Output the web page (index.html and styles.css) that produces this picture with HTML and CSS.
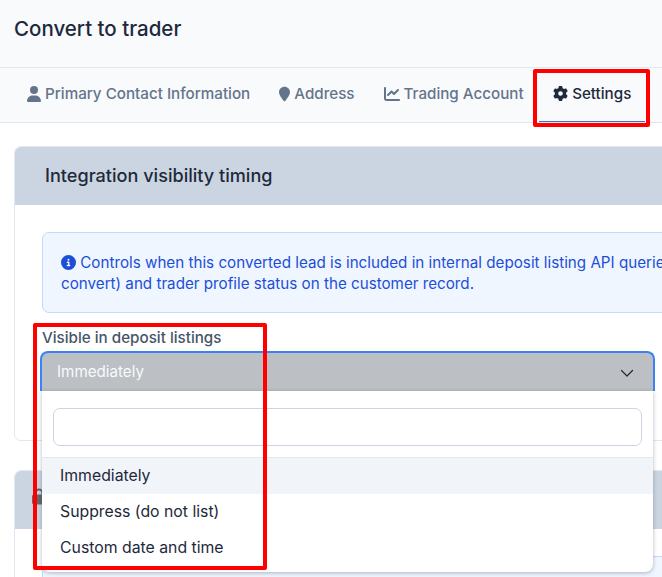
FILE: index.html
```html
<!DOCTYPE html>
<html lang="en">
<head>
<meta charset="utf-8">
<title>Convert to trader</title>
<link rel="stylesheet" href="styles.css">
</head>
<body>
<div class="page">
  <header class="head"><h1>Convert to trader</h1></header>
  <nav class="tabs">
    <a class="tab">
      <svg class="ico i-user" viewBox="0 0 448 512"><path d="M224 256a128 128 0 1 0 0-256 128 128 0 1 0 0 256zm-45.700 48C79.800 304 0 383.800 0 482.300 0 498.700 13.300 512 29.700 512h388.600c16.400 0 29.700-13.300 29.700-29.700C448 383.800 368.200 304 269.700 304h-91.400z"/></svg>
      Primary Contact Information</a>
    <a class="tab">
      <svg class="ico i-pin" viewBox="0 0 384 512"><path d="M215.700 499.200C267 435 384 279.400 384 192 384 86 298 0 192 0S0 86 0 192c0 87.400 117 243 168.300 307.200 12.300 15.300 35.100 15.300 47.400 0z"/></svg>
      Address</a>
    <a class="tab">
      <svg class="ico i-chart" viewBox="0 0 512 512"><path d="M64 64c0-17.700-14.300-32-32-32S0 46.300 0 64v336c0 44.200 35.800 80 80 80h400c17.700 0 32-14.300 32-32s-14.300-32-32-32H80c-8.800 0-16-7.200-16-16V64zm406.600 86.600c12.500-12.500 12.500-32.800 0-45.300s-32.800-12.500-45.300 0L320 210.700l-57.400-57.400c-12.500-12.500-32.800-12.500-45.300 0l-112 112c-12.500 12.500-12.500 32.800 0 45.300s32.800 12.500 45.300 0l89.400-89.300 57.400 57.400c12.500 12.500 32.800 12.500 45.300 0l128-128z"/></svg>
      Trading Account</a>
    <a class="tab active">
      <svg class="ico" viewBox="0 0 512 512"><path d="M495.900 166.600c3.200 8.700.5 18.400-6.400 24.600l-43.300 39.400c1.100 8.300 1.700 16.800 1.700 25.400s-.6 17.100-1.700 25.400l43.300 39.400c6.900 6.200 9.600 15.900 6.400 24.600-4.400 11.900-9.700 23.300-15.800 34.300l-4.700 8.100c-6.600 11-14 21.400-22.100 31.200-5.900 7.200-15.700 9.600-24.500 6.800l-55.700-17.700c-13.400 10.300-28.200 18.900-44 25.400l-12.500 57.100c-2 9.100-9 16.300-18.200 17.800-13.800 2.300-28 3.500-42.500 3.500s-28.700-1.200-42.500-3.500c-9.200-1.500-16.200-8.700-18.200-17.800l-12.500-57.100c-15.800-6.500-30.600-15.100-44-25.400l-55.600 17.800c-8.800 2.800-18.600.3-24.500-6.800-8.100-9.800-15.500-20.200-22.100-31.200l-4.700-8.100c-6.100-11-11.400-22.400-15.800-34.300-3.200-8.700-.5-18.400 6.400-24.600l43.300-39.400c-1.100-8.400-1.700-16.900-1.700-25.500s.6-17.100 1.700-25.400l-43.300-39.400c-6.900-6.200-9.600-15.900-6.400-24.600 4.400-11.900 9.700-23.300 15.800-34.300l4.700-8.100c6.600-11 14-21.400 22.100-31.200 5.900-7.200 15.700-9.600 24.500-6.800l55.700 17.700c13.400-10.300 28.200-18.900 44-25.400l12.500-57.100c2-9.100 9-16.300 18.200-17.800C227.300 1.200 241.500 0 256 0s28.700 1.200 42.500 3.500c9.200 1.500 16.200 8.700 18.200 17.800l12.500 57.100c15.800 6.500 30.600 15.100 44 25.400l55.700-17.700c8.800-2.800 18.600-.3 24.500 6.800 8.100 9.800 15.500 20.200 22.100 31.200l4.700 8.100c6.100 11 11.400 22.400 15.800 34.300zM256 336a80 80 0 1 0 0-160 80 80 0 1 0 0 160z"/></svg>
      Settings</a>
  </nav>
  <main class="content">
    <section class="card">
      <h2 class="card-head">Integration visibility timing</h2>
      <div class="card-body">
        <div class="alert"><svg class="ico info" viewBox="0 0 512 512"><path d="M256 512a256 256 0 1 0 0-512 256 256 0 1 0 0 512zm-40-176h24v-64h-24c-13.300 0-24-10.700-24-24s10.700-24 24-24h48c13.300 0 24 10.700 24 24v88h8c13.300 0 24 10.700 24 24s-10.700 24-24 24h-80c-13.300 0-24-10.700-24-24s10.700-24 24-24zm40-208a32 32 0 1 1 0 64 32 32 0 1 1 0-64z"/></svg> Controls when this converted lead is included in internal deposit listing API queries<br>convert) and trader profile status on the customer record.</div>
        <label class="label">Visible in deposit listings</label>
        <div class="select">
          <div class="select-box">
            <span>Immediately</span>
            <svg class="chev" viewBox="0 0 16 16"><path d="M2.500 5.500 8 11l5.500-5.500" fill="none" stroke="currentColor" stroke-width="1.200" stroke-linecap="round" stroke-linejoin="round"/></svg>
          </div>
          <div class="drop">
            <div class="search-wrap"><input class="search" type="text" aria-label="Search"></div>
            <ul class="opts">
              <li class="opt hl">Immediately</li>
              <li class="opt">Suppress (do not list)</li>
              <li class="opt">Custom date and time</li>
            </ul>
          </div>
        </div>
      </div>
    </section>
    <section class="card second">
      <h2 class="card-head"><svg class="ico lock" viewBox="0 0 448 512"><path d="M144 144v48h160v-48c0-44.200-35.800-80-80-80s-80 35.800-80 80zm-64 48v-48C80 64.500 144.500 0 224 0s144 64.500 144 144v48h16c35.300 0 64 28.700 64 64v192c0 35.300-28.700 64-64 64H64c-35.300 0-64-28.700-64-64V256c0-35.300 28.700-64 64-64h16z"/></svg></h2>
      <div class="card-body"><div class="alert"></div></div>
    </section>
  </main>
  <i class="mark mark-tab"></i>
  <i class="mark mark-select"></i>
</div>
</body>
</html>
```
FILE: styles.css
```css
* { box-sizing: border-box; }
html, body { margin: 0; height: 100%; overflow: hidden; }
body { font-family: Inter, "Liberation Sans", sans-serif; color: #1e293b; background: #fff; }
.page { position: relative; width: 662px; height: 577px; overflow: hidden; }
.head { height: 68px; padding: 17px 14px 0; background: #f8fafc; border-bottom: 1px solid #e2e8f0; }
.head h1 { margin: 0; font-size: 20.500px; line-height: 24px; font-weight: 500; color: #1e293b; }
.tabs { display: flex; height: 55px; padding-left: 12.500px; background: #f8fafc; border-bottom: 1px solid #e2e8f0; white-space: nowrap; }
.tab { display: flex; align-items: center; gap: 4px; height: 54px; padding: 0 14.500px 3px; font-size: 15.200px; font-weight: 500; color: #64748b; }
.tab.active { margin-left: 1px; padding: 0 14px 3px; color: #1e293b; border-bottom: 1px solid #3b6fd4; }
.ico { width: 15px; height: 15px; fill: currentColor; flex: none; }
.i-user { width: 14px; height: 16px; }
.i-pin { width: 11px; height: 16px; }
.i-chart { width: 16px; height: 16px; }
.content { padding: 23px 0 0 14px; }
.card { width: 700px; height: 295px; border: 1px solid #e2e8f0; border-radius: 7px; background: #fff; }
.second { height: 200px; margin-top: 29px; }
.card-head { margin: 0; height: 58px; padding: 15px 30px 0; border-radius: 6px 6px 0 0; background: #cbd5e1; font-size: 18.100px; line-height: 26px; font-weight: 500; color: #1e293b; }
.card-body { padding: 27px 27px 0; }
.alert { height: 81px; padding: 19px 18px 0; border: 1px solid #bfdbfe; border-radius: 7px; background: #eff6ff; color: #1d4ed8; font-size: 15.200px; line-height: 21px; white-space: nowrap; }
.info { vertical-align: -2px; color: #1d4ed8; }
.label { display: block; margin-top: 15px; font-size: 15.200px; line-height: 20px; font-weight: 500; color: #475569; }
.select { position: relative; width: 615px; margin: 3px 0 0 -2px; }
.select-box { display: flex; align-items: center; justify-content: space-between; height: 40px; padding: 0 18px 0 15px; background: #bcbfc3; border: solid #3b82f6; border-width: 2px 2px 0; border-radius: 8px 8px 0 0; font-size: 15.200px; color: #f8fafc; }
.select-box span { margin-top: -1px; }
.chev { width: 16px; height: 16px; color: #1e293b; margin-top: 2px; }
.drop { position: absolute; z-index: 2; left: 2px; top: 40px; width: 611px; height: 181px; background: #fff; border-radius: 0 0 8px 8px; box-shadow: 0 1px 4px rgba(15, 23, 42, .3); }
.search-wrap { height: 66px; padding: 17px 11px 0; }
.search { display: block; width: 100%; height: 38px; border: 1px solid #cbd5e1; border-radius: 7px; background: #fff; outline: 0; }
.opts { margin: 0; padding: 0; list-style: none; }
.opt { height: 36px; padding-left: 18px; font-size: 15.800px; line-height: 36px; color: #1e293b; }
.hl { height: 37px; background: #f1f5f9; border-top: 1px solid #e2e8f0; line-height: 35px; }
.lock { display: block; margin: 2px 0 0 -13px; width: 14px; height: 17px; color: #64686e; }
.mark { position: absolute; z-index: 5; border: 4px solid #f00; border-radius: 2px; }
.mark-tab { left: 533px; top: 69px; width: 117px; height: 58px; }
.mark-select { left: 33px; top: 323px; width: 234px; height: 247px; }
```
